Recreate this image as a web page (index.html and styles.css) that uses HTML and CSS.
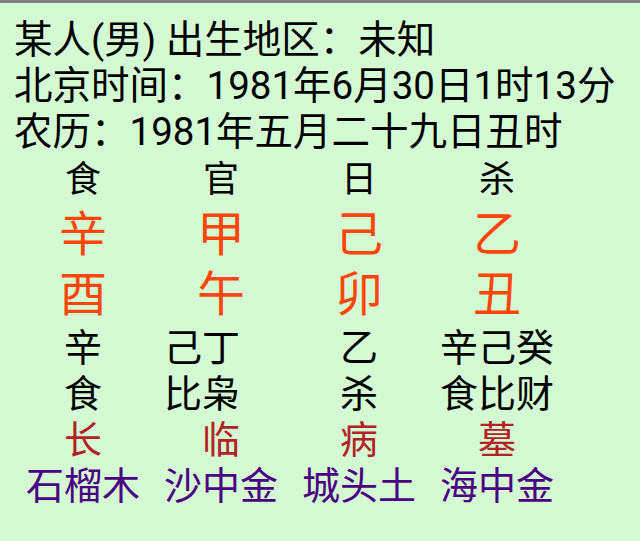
FILE: index.html
```html
<!DOCTYPE html>
<html lang="zh-CN">
<head>
<meta charset="utf-8">
<title>八字</title>
<link rel="stylesheet" href="styles.css">
</head>
<body>
<div class="topbar"></div>
<main class="page">
  <section class="info">
    <div class="info-line">某人(男) 出生地区：未知</div>
    <div class="info-line">北京时间：1981年6月30日1时13分</div>
    <div class="info-line">农历：1981年五月二十九日丑时</div>
  </section>
  <section class="chart">
    <div class="row gods"><span>食</span><span>官</span><span>日</span><span>杀</span></div>
    <div class="row stems"><span>辛</span><span>甲</span><span>己</span><span>乙</span></div>
    <div class="row stems"><span>酉</span><span>午</span><span>卯</span><span>丑</span></div>
    <div class="row hidden"><span>辛</span><span class="shift">己丁</span><span>乙</span><span>辛己癸</span></div>
    <div class="row hidden"><span>食</span><span class="shift">比枭</span><span>杀</span><span>食比财</span></div>
    <div class="row stage"><span>长</span><span>临</span><span>病</span><span>墓</span></div>
    <div class="row nayin"><span>石榴木</span><span>沙中金</span><span>城头土</span><span>海中金</span></div>
  </section>
</main>
</body>
</html>
```
FILE: styles.css
```css
html, body {
  margin: 0;
  padding: 0;
  background: #d4fad4;
}
body {
  width: 640px;
  height: 541px;
  overflow: hidden;
  font-family: Roboto, "Noto Sans CJK SC", sans-serif;
  color: #000;
}
.topbar {
  height: 3px;
  background: #808080;
}
.page {
  padding: 14px 0 0 14px;
}
.info-line {
  font-size: 38.5px;
  line-height: 46px;
  white-space: nowrap;
}
.row {
  display: grid;
  grid-template-columns: repeat(4, 138px);
  text-align: center;
  white-space: nowrap;
}
.gods {
  font-size: 36px;
  line-height: 50px;
}
.stems {
  font-size: 48px;
  line-height: 60px;
  color: #ff460a;
}
.hidden, .stage, .nayin {
  font-size: 38px;
  line-height: 46px;
}
.stage {
  color: #b22222;
}
.nayin {
  color: #4b0082;
}
.shift {
  padding-right: 1em;
}
```
